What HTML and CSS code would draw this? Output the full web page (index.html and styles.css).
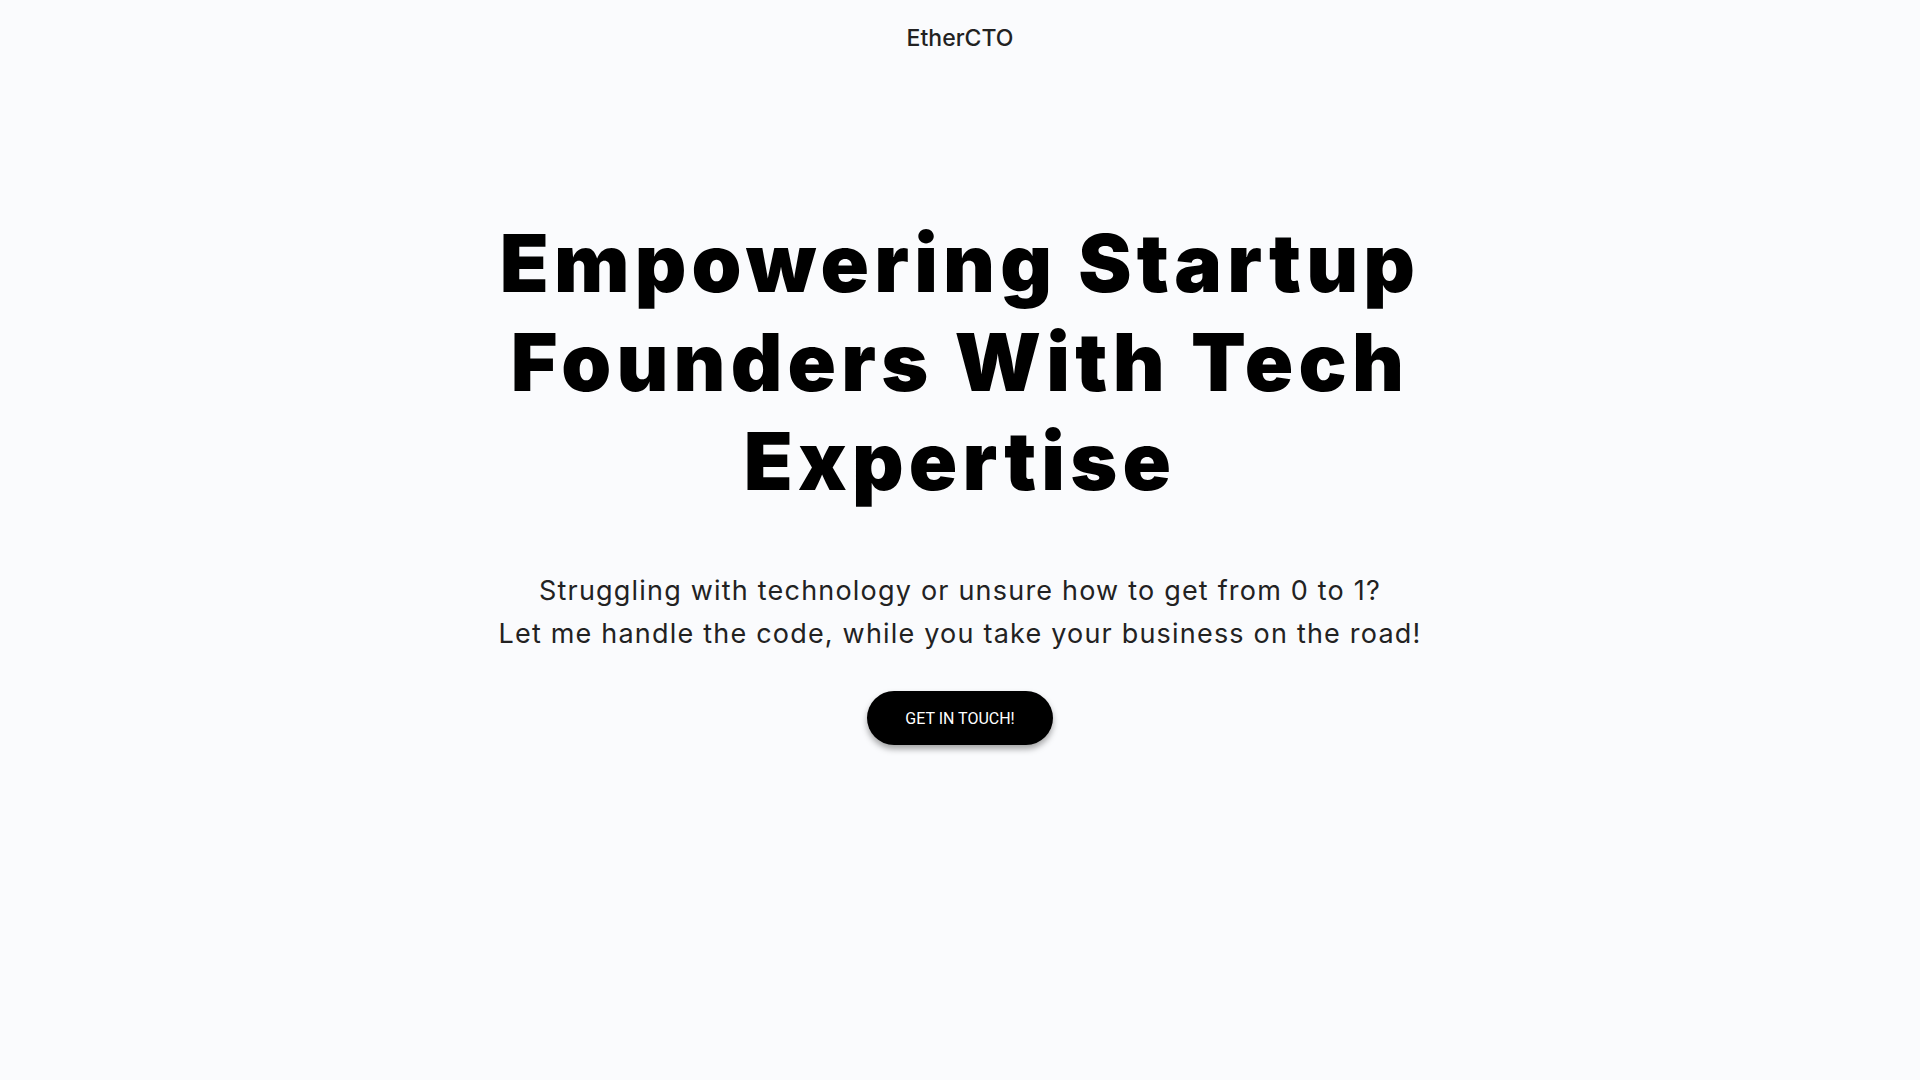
FILE: index.html
```html
<!DOCTYPE html>
<html lang="en">
<head>
<meta charset="utf-8">
<title>EtherCTO</title>
<link rel="stylesheet" href="styles.css">
</head>
<body>
<header class="site-header">
  <a class="brand" href="#">EtherCTO</a>
</header>
<main class="hero">
  <h1 class="hero-title">Empowering Startup Founders With Tech Expertise</h1>
  <p class="hero-sub">Struggling with technology or unsure how to get from 0 to 1?<br>Let me handle the code, while you take your business on the road!</p>
  <a class="cta" href="#">GET IN TOUCH!</a>
</main>
</body>
</html>
```
FILE: styles.css
```css
* { box-sizing: border-box; }
html, body { margin: 0; padding: 0; }
body {
  background: #fafbfd;
  color: #111;
  font-family: "Inter", "Liberation Sans", sans-serif;
  min-height: 1080px;
}
.site-header {
  display: flex;
  justify-content: center;
  padding-top: 20px;
}
.brand {
  font-family: "Inter", sans-serif;
  font-size: 23px;
  line-height: 36px;
  color: #222;
  text-decoration: none;
  font-weight: 500;
}
.hero {
  display: flex;
  flex-direction: column;
  align-items: center;
  text-align: center;
  padding-top: 157px;
}
.hero-title {
  margin: 0;
  width: 1000px;
  font-family: "Inter", sans-serif;
  font-weight: 900;
  font-size: 80px;
  line-height: 99px;
  color: #000;
  letter-spacing: 5.2px;
}
.hero-sub {
  margin: 59px 0 0;
  font-family: "Inter", sans-serif;
  font-size: 27px;
  line-height: 43px;
  color: #222;
  font-weight: 400;
  letter-spacing: 1.2px;
}
.cta {
  margin-top: 36px;
  display: flex;
  align-items: center;
  justify-content: center;
  width: 186px;
  height: 54px;
  border-radius: 27px;
  background: #000;
  color: #fff;
  font-family: "Roboto", "Liberation Sans", sans-serif;
  font-size: 16px;
  text-decoration: none;
  box-shadow: 0 4px 6px rgba(0,0,0,0.35);
}
```
